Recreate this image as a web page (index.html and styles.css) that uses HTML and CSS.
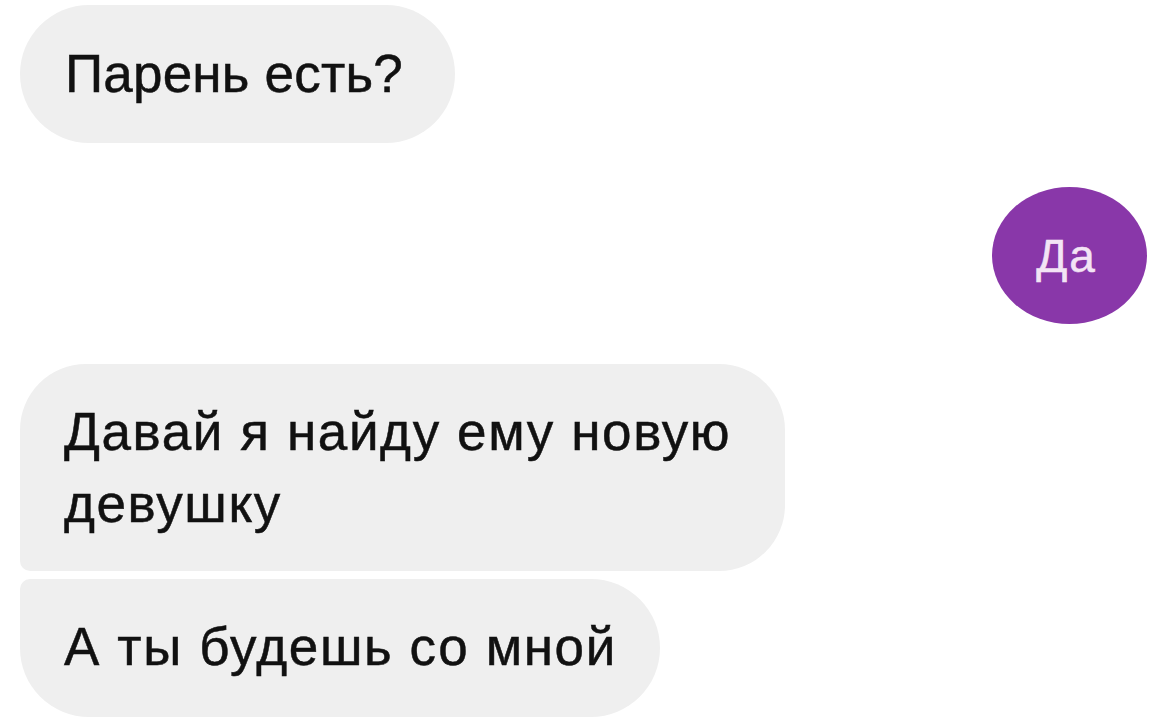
FILE: index.html
```html
<!DOCTYPE html>
<html lang="ru">
<head>
<meta charset="utf-8">
<link rel="stylesheet" href="styles.css">
</head>
<body>
<div class="chat">
  <div class="bubble in single">Парень есть?</div>
  <div class="bubble out">Да</div>
  <div class="group">
    <div class="bubble in first">Давай я найду ему новую<br>девушку</div>
    <div class="bubble in last">А ты будешь со мной</div>
  </div>
</div>
</body>
</html>
```
FILE: styles.css
```css
html, body {
  margin: 0;
  padding: 0;
  background: #fff;
}
body {
  width: 1170px;
  height: 721px;
  overflow: hidden;
  font-family: "Liberation Sans", Arial, sans-serif;
  color: #111;
}
.chat {
  display: flex;
  flex-direction: column;
  padding: 5px 23px 0 20px;
}
.bubble {
  background: #efefef;
  font-size: 53px;
  line-height: 62px;
  box-sizing: border-box;
  -webkit-text-stroke: 0.5px currentColor;
}
.in {
  align-self: flex-start;
}
.single {
  width: 435px;
  height: 138px;
  padding: 38px 0 0 45px;
  border-radius: 69px;
  letter-spacing: 0.2px;
}
.out {
  align-self: flex-end;
  width: 155px;
  height: 137px;
  border-radius: 50%;
  background: #8937a9;
  color: #f3e4f5;
  font-size: 46px;
  letter-spacing: 2px;
  display: flex;
  align-items: center;
  justify-content: center;
  margin-top: 44px;
  padding-right: 6px;
}
.group {
  margin-top: 40px;
  display: flex;
  flex-direction: column;
  gap: 8px;
  align-items: flex-start;
}
.first {
  width: 765px;
  height: 207px;
  padding: 32px 0 0 44px;
  line-height: 72px;
  letter-spacing: 1.6px;
  border-radius: 66px 66px 66px 10px;
}
.last {
  width: 640px;
  height: 138px;
  padding: 37px 0 0 44px;
  letter-spacing: 1.6px;
  border-radius: 10px 69px 69px 69px;
}
```
